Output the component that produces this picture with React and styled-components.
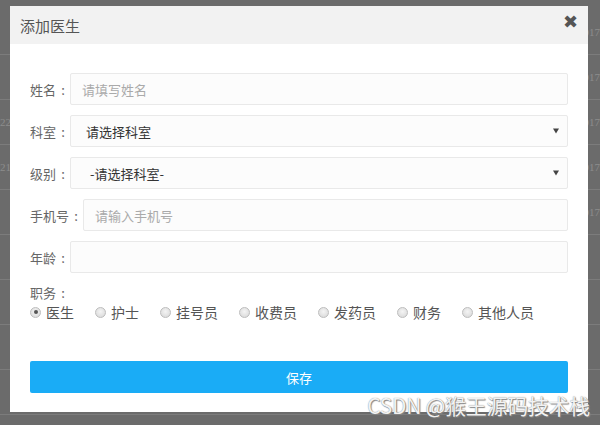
import styled, { createGlobalStyle } from 'styled-components';

const GlobalStyle = createGlobalStyle`
  html, body {
    margin: 0;
    padding: 0;
    background: #6b6b6b;
  }
  body {
    font-family: "Noto Sans CJK SC", "Noto Sans", sans-serif;
  }
`;

const Page = styled.div`
  position: relative;
  width: 600px;
  height: 425px;
  overflow: hidden;
  background: #6b6b6b;
`;

const Table = styled.div`
  display: flex;
  flex-direction: column;
  padding-top: 10px;
`;

const TableRow = styled.div`
  height: 44px;
  display: flex;
  align-items: center;
  justify-content: space-between;
  border-bottom: 1px solid #7c7c7c;
  font-family: "Liberation Serif", serif;
  font-size: 11px;
  color: #8d8d8d;
`;

const Modal = styled.div`
  position: absolute;
  left: 10px;
  top: 6px;
  width: 578px;
  height: 406px;
  background: #fff;
  display: flex;
  flex-direction: column;
`;

const Header = styled.div`
  height: 38px;
  background: #f2f2f2;
  display: flex;
  align-items: center;
  justify-content: space-between;
  padding: 0 10px;
`;

const Title = styled.div`
  font-size: 15px;
  color: #555;
`;

const Close = styled.div`
  font-family: "DejaVu Sans", sans-serif;
  font-size: 18px;
  color: #555;
  line-height: 1;
  margin-top: -6px;
`;

const Body = styled.div`
  padding: 29px 20px 0;
  display: flex;
  flex-direction: column;
`;

const Rows = styled.div`
  display: flex;
  flex-direction: column;
  gap: 10px;
`;

const Row = styled.div`
  display: flex;
  align-items: center;
  height: 32px;
`;

const Label = styled.div`
  display: flex;
  font-size: 13px;
  color: #666;
  white-space: nowrap;
`;

const Colon = styled.span`
  width: 14px;
  text-align: center;
`;

const Field = styled.div`
  position: relative;
  flex: 1;
  height: 30px;
  border: 1px solid #e9e9e9;
  border-radius: 2px;
  background: #fcfcfc;
  display: flex;
  align-items: center;
  padding-left: ${p => p.$pad || 11}px;
  font-size: 13px;
  color: ${p => (p.$placeholder ? '#aaa' : '#333')};
`;

const Arrow = styled.span`
  position: absolute;
  right: 8px;
  top: 50%;
  transform: translateY(-50%);
  width: 0;
  height: 0;
  border-left: 3px solid transparent;
  border-right: 3px solid transparent;
  border-top: 5px solid #444;
`;

const DutyLabel = styled(Label)`
  margin-top: 12px;
  line-height: 16px;
`;

const Radios = styled.div`
  display: flex;
  align-items: center;
  gap: 21px;
  margin-top: 1px;
`;

const RadioItem = styled.label`
  display: flex;
  align-items: center;
  gap: 5px;
  font-size: 14px;
  color: #555;
`;

const Dot = styled.span`
  width: 9px;
  height: 9px;
  border-radius: 50%;
  border: 1px solid #bdbdbd;
  background: radial-gradient(circle at 50% 40%, #f4f4f4, #d6d6d6);
  display: flex;
  align-items: center;
  justify-content: center;
  &::after {
    content: '';
    width: 4px;
    height: 4px;
    border-radius: 50%;
    background: ${p => (p.$checked ? '#555' : 'transparent')};
  }
`;

const SaveButton = styled.button`
  margin-top: 39px;
  height: 32px;
  border: none;
  border-radius: 2px;
  background: #1aacf6;
  color: #fff;
  font-family: inherit;
  font-size: 13px;
`;

const Watermark = styled.div`
  position: absolute;
  right: 10px;
  bottom: 5px;
  font-size: 21px;
  color: rgba(255, 255, 255, 0.92);
  text-shadow: 0 0 1px #777, 1px 1px 1px #888;
  letter-spacing: -0.3px;
  white-space: nowrap;
`;

const backRows = [
  { left: '', right: '017' },
  { left: '', right: '017' },
  { left: '22', right: '017' },
  { left: '21', right: '017' },
  { left: '', right: '017' },
  { left: '', right: '' },
  { left: '', right: '' },
  { left: '', right: '' },
  { left: '', right: '' },
];

const fields = [
  { label: '姓名', text: '请填写姓名', placeholder: true },
  { label: '科室', text: '请选择科室', select: true, pad: 15 },
  { label: '级别', text: '-请选择科室-', select: true, pad: 19 },
  { label: '手机号', text: '请输入手机号', placeholder: true },
  { label: '年龄', text: '', placeholder: true },
];

const duties = ['医生', '护士', '挂号员', '收费员', '发药员', '财务', '其他人员'];

export default function App() {
  return (
    <Page>
      <GlobalStyle />
      <Table>
        {backRows.map((r, i) => (
          <TableRow key={i}>
            <span>{r.left}</span>
            <span>{r.right}</span>
          </TableRow>
        ))}
      </Table>
      <Modal>
        <Header>
          <Title>添加医生</Title>
          <Close>✖</Close>
        </Header>
        <Body>
          <Rows>
            {fields.map(f => (
              <Row key={f.label}>
                <Label>
                  {f.label}
                  <Colon>:</Colon>
                </Label>
                <Field $placeholder={f.placeholder} $pad={f.pad}>
                  {f.text}
                  {f.select && <Arrow />}
                </Field>
              </Row>
            ))}
          </Rows>
          <DutyLabel>
            职务<Colon>:</Colon>
          </DutyLabel>
          <Radios>
            {duties.map((d, i) => (
              <RadioItem key={d}>
                <Dot $checked={i === 0} />
                {d}
              </RadioItem>
            ))}
          </Radios>
          <SaveButton>保存</SaveButton>
        </Body>
      </Modal>
      <Watermark>CSDN @猴王源码技术栈</Watermark>
    </Page>
  );
}
